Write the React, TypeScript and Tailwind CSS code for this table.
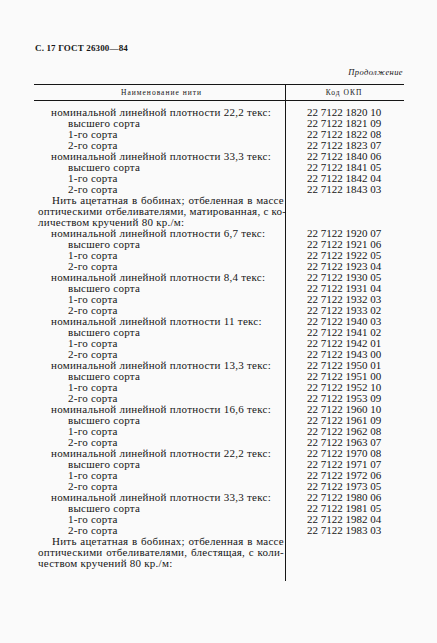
import React from "react";

type Row = { k: "n" | "s" | "p1" | "p2" | "p3"; l: string; c?: string };

const rows: Row[] = [
  { k: "n", l: "номинальной линейной плотности 22,2 текс:", c: "22 7122 1820 10" },
  { k: "s", l: "высшего сорта", c: "22 7122 1821 09" },
  { k: "s", l: "1-го сорта", c: "22 7122 1822 08" },
  { k: "s", l: "2-го сорта", c: "22 7122 1823 07" },
  { k: "n", l: "номинальной линейной плотности 33,3 текс:", c: "22 7122 1840 06" },
  { k: "s", l: "высшего сорта", c: "22 7122 1841 05" },
  { k: "s", l: "1-го сорта", c: "22 7122 1842 04" },
  { k: "s", l: "2-го сорта", c: "22 7122 1843 03" },
  { k: "p1", l: "Нить ацетатная в бобинах; отбеленная в массе" },
  { k: "p2", l: "оптическими отбеливателями, матированная, с ко-" },
  { k: "p3", l: "личеством кручений 80 кр./м:" },
  { k: "n", l: "номинальной линейной плотности 6,7 текс:", c: "22 7122 1920 07" },
  { k: "s", l: "высшего сорта", c: "22 7122 1921 06" },
  { k: "s", l: "1-го сорта", c: "22 7122 1922 05" },
  { k: "s", l: "2-го сорта", c: "22 7122 1923 04" },
  { k: "n", l: "номинальной линейной плотности 8,4 текс:", c: "22 7122 1930 05" },
  { k: "s", l: "высшего сорта", c: "22 7122 1931 04" },
  { k: "s", l: "1-го сорта", c: "22 7122 1932 03" },
  { k: "s", l: "2-го сорта", c: "22 7122 1933 02" },
  { k: "n", l: "номинальной линейной плотности 11 текс:", c: "22 7122 1940 03" },
  { k: "s", l: "высшего сорта", c: "22 7122 1941 02" },
  { k: "s", l: "1-го сорта", c: "22 7122 1942 01" },
  { k: "s", l: "2-го сорта", c: "22 7122 1943 00" },
  { k: "n", l: "номинальной линейной плотности 13,3 текс:", c: "22 7122 1950 01" },
  { k: "s", l: "высшего сорта", c: "22 7122 1951 00" },
  { k: "s", l: "1-го сорта", c: "22 7122 1952 10" },
  { k: "s", l: "2-го сорта", c: "22 7122 1953 09" },
  { k: "n", l: "номинальной линейной плотности 16,6 текс:", c: "22 7122 1960 10" },
  { k: "s", l: "высшего сорта", c: "22 7122 1961 09" },
  { k: "s", l: "1-го сорта", c: "22 7122 1962 08" },
  { k: "s", l: "2-го сорта", c: "22 7122 1963 07" },
  { k: "n", l: "номинальной линейной плотности 22,2 текс:", c: "22 7122 1970 08" },
  { k: "s", l: "высшего сорта", c: "22 7122 1971 07" },
  { k: "s", l: "1-го сорта", c: "22 7122 1972 06" },
  { k: "s", l: "2-го сорта", c: "22 7122 1973 05" },
  { k: "n", l: "номинальной линейной плотности 33,3 текс:", c: "22 7122 1980 06" },
  { k: "s", l: "высшего сорта", c: "22 7122 1981 05" },
  { k: "s", l: "1-го сорта", c: "22 7122 1982 04" },
  { k: "s", l: "2-го сорта", c: "22 7122 1983 03" },
  { k: "p1", l: "Нить ацетатная в бобинах; отбеленная в массе" },
  { k: "p2", l: "оптическими отбеливателями, блестящая, с коли-" },
  { k: "p3", l: "чеством кручений 80 кр./м:" },
];

const leftCls: Record<Row["k"], string> = {
  n: "pl-[17px]",
  s: "pl-[34px]",
  p1: "pl-[18px] pr-px text-justify [text-align-last:justify]",
  p2: "pl-[4px] pr-px text-justify [text-align-last:justify]",
  p3: "pl-[4px]",
};

export default function App() {
  return (
    <div
      className="w-[437px] h-[643px] bg-[#fafafa] text-[#161616] overflow-hidden"
      style={{ fontFamily: '"Liberation Serif", "Times New Roman", serif' }}
    >
      <div className="pt-[42px] pl-[35px] text-[9px] font-bold leading-[12px] tracking-[0.15px]">
        С. 17 ГОСТ 26300—84
      </div>
      <div className="mt-[12px] pr-[34px] text-right text-[8.5px] italic leading-[12px] tracking-[0.4px]">
        Продолжение
      </div>
      <div className="mt-[6px] ml-[34px] w-[370px] border-t border-[#161616]">
        <div className="grid grid-cols-[252px_118px] h-[16px] border-b border-[#161616] text-[7.5px] tracking-[1px] leading-[15px]">
          <div className="text-center border-r border-[#161616] pl-[4px]">Наименование нити</div>
          <div className="text-center pr-[2px]">Код ОКП</div>
        </div>
        <div className="grid grid-cols-[252px_118px] text-[11px] leading-[11px]">
          <div className="border-r border-[#161616] pt-[6px] pb-[12px] whitespace-nowrap tracking-[0.25px]">
            {rows.map((r, i) => (
              <div key={i} className={`h-[11px] ${leftCls[r.k]}`}>
                {r.l}
              </div>
            ))}
          </div>
          <div className="pt-[6px]">
            {rows.map((r, i) => (
              <div key={i} className="h-[11px] text-center pr-[2px] whitespace-nowrap">
                {r.c ?? ""}
              </div>
            ))}
          </div>
        </div>
      </div>
    </div>
  );
}
